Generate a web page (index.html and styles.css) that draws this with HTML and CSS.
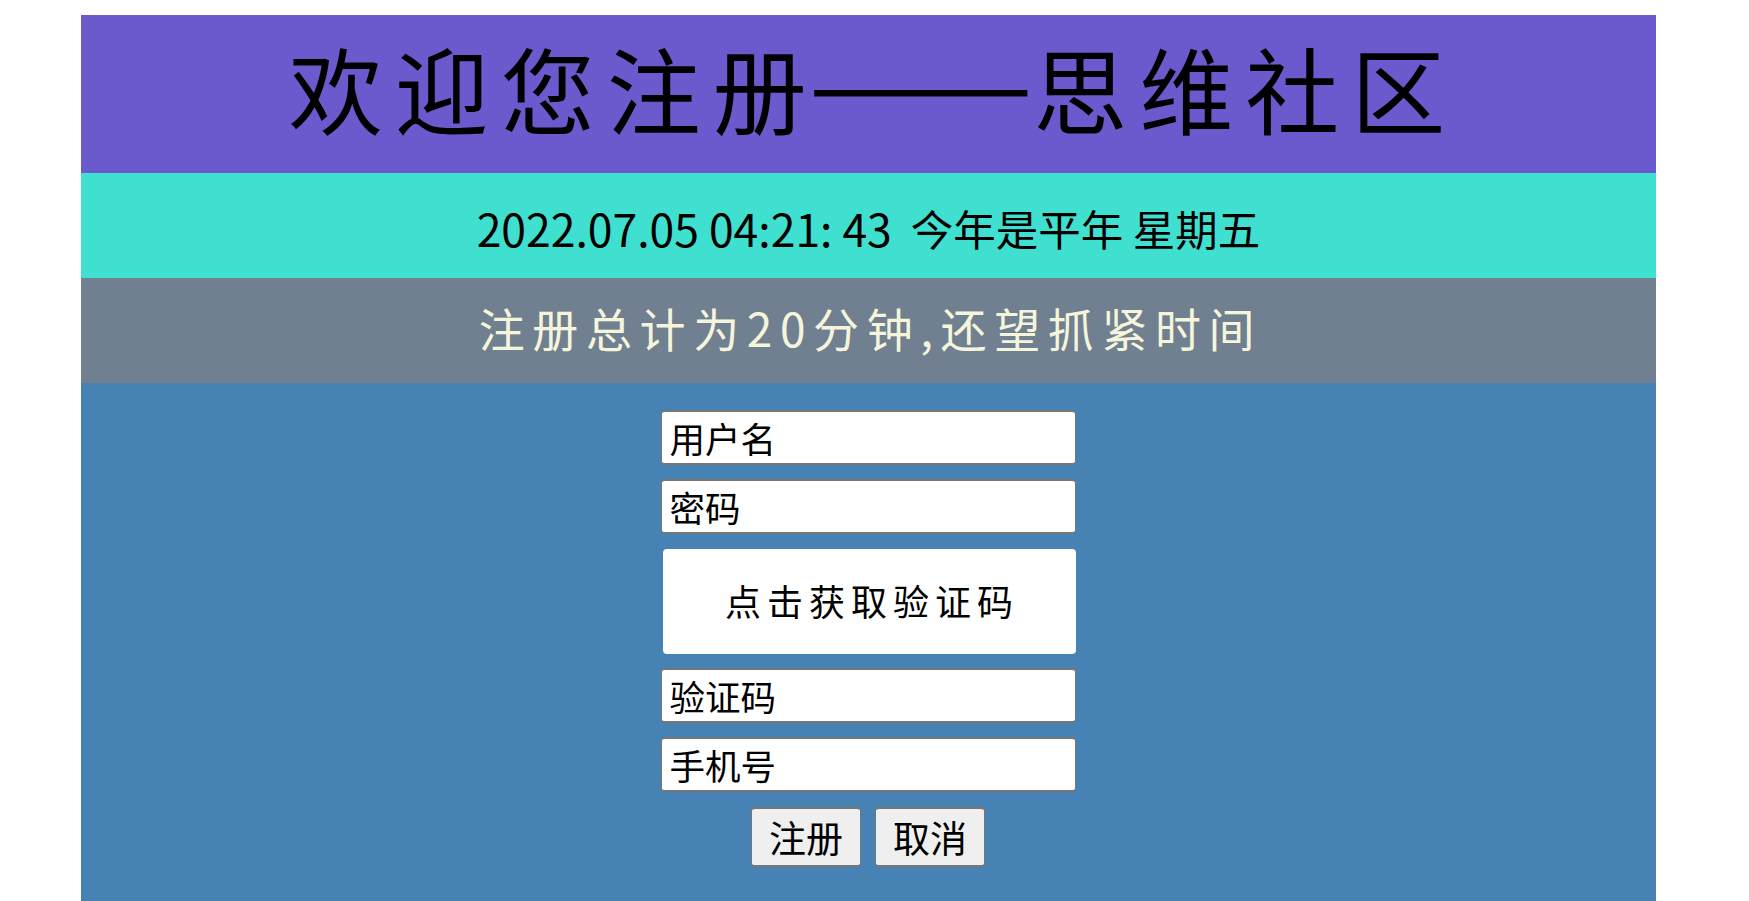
FILE: index.html
```html
<!DOCTYPE HTML>
<html lang="zh-CN">
<head>
<meta charset="UTF-8">
<title>注册</title>
<link rel="stylesheet" href="styles.css">
</head>
<body>
  <div class="page">
    <h1 class="welcome">欢迎您注册<span class="dash">——</span>思维社区</h1>
    <div class="clock"><span class="clockTime">2022.07.05 04:21: 43</span>&nbsp; 今年是平年 星期五</div>
    <div class="notice">注册总计为20分钟,还望抓紧时间</div>
    <form class="regForm">
      <input class="field" type="text" placeholder="用户名">
      <input class="field" type="password" placeholder="密码">
      <div class="captcha">点击获取验证码</div>
      <input class="field" type="text" placeholder="验证码">
      <input class="field" type="text" placeholder="手机号">
      <div class="btnRow">
        <button class="btn" type="button">注册</button>
        <button class="btn" type="button">取消</button>
      </div>
    </form>
  </div>
</body>
</html>
```

FILE: styles.css
```css
* { margin: 0; padding: 0; box-sizing: border-box; }
html, body { height: 100%; overflow: hidden; background: #fff; }
body { font-family: "Noto Sans CJK SC", "Liberation Sans", sans-serif; color: #000; }

.page {
  display: flex;
  flex-direction: column;
  width: 1575px;
  height: 886px;
  margin: 15px 0 0 81px;
}

.welcome {
  display: flex;
  justify-content: center;
  align-items: center;
  height: 158px;
  background: #6a5acd;
  font-size: 94px;
  font-weight: 400;
  letter-spacing: 12px;
  line-height: 1;
  padding: 0 0 14px 9px;
}
.dash {
  font-size: 106px;
  letter-spacing: 0;
  margin: 0 24px 0 13px;
  transform: translateY(-10px) scaleX(1.27);
}

.clock {
  display: flex;
  justify-content: center;
  align-items: center;
  height: 105px;
  padding-top: 4px;
  background: #40e0d0;
  font-size: 42.5px;
  white-space: pre;
}
.clockTime { font-size: 44.5px; }

.notice {
  display: flex;
  justify-content: center;
  align-items: center;
  height: 105px;
  padding: 0 0 8px 4px;
  background: #708090;
  color: #f5f5dc;
  font-size: 46px;
  letter-spacing: 7.6px;
}

.regForm {
  flex: 1;
  display: flex;
  flex-direction: column;
  align-items: center;
  gap: 14px;
  padding-top: 27px;
  background: #4682b4;
}

.field {
  width: 415px;
  height: 55px;
  margin-left: -1px;
  padding: 0 8px;
  background: #fff;
  border: #767676 solid;
  border-width: 2px 1px;
  border-radius: 4px;
  font-family: inherit;
  font-size: 35.5px;
}
.field::placeholder { color: #000; opacity: 1; }

.captcha {
  display: flex;
  justify-content: center;
  align-items: center;
  width: 413px;
  height: 105px;
  margin: 1px 0 0 1px;
  padding: 0 0 4px 6px;
  background: #fff;
  border-radius: 4px;
  font-size: 36px;
  letter-spacing: 6px;
}

.btnRow { display: flex; gap: 14px; margin: 1px 0 0 -1px; }
.btn {
  width: 110px;
  height: 60px;
  background: #efefef;
  border: #767676 solid;
  border-width: 2px 1px;
  border-radius: 4px;
  font-family: inherit;
  font-size: 37px;
  color: #000;
}
```
